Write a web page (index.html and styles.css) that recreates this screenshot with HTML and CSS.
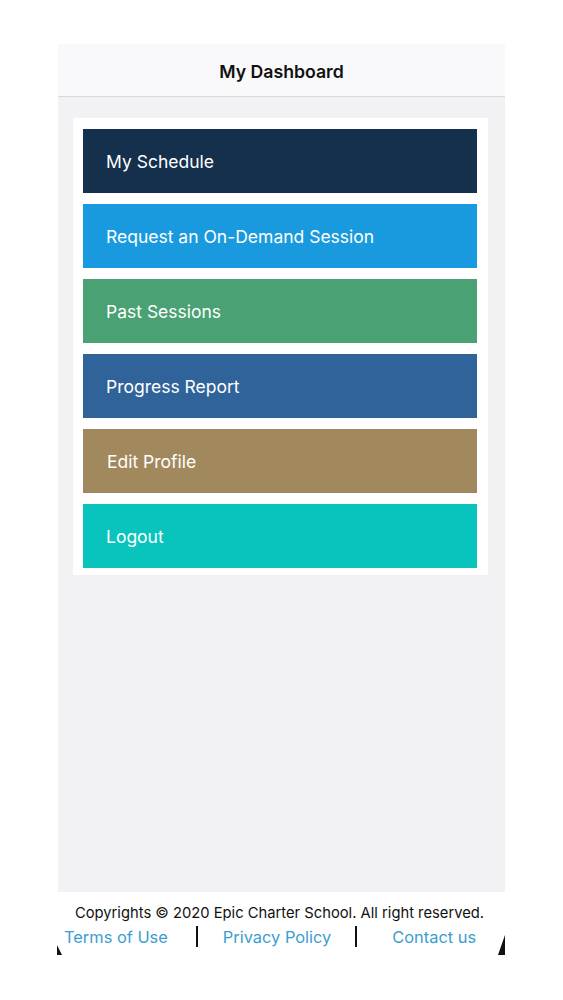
FILE: index.html
```html
<!DOCTYPE html>
<html>
<head>
<meta charset="utf-8">
<link rel="stylesheet" href="styles.css">
</head>
<body>
<div class="phone">
  <header class="topbar"><h1>My Dashboard</h1></header>
  <main class="content">
    <nav class="menu">
      <a class="item schedule">My Schedule</a>
      <a class="item request">Request an On-Demand Session</a>
      <a class="item past">Past Sessions</a>
      <a class="item progress">Progress Report</a>
      <a class="item profile">Edit Profile</a>
      <a class="item logout">Logout</a>
    </nav>
  </main>
  <footer class="footer">
    <p class="copy">Copyrights © 2020 Epic Charter School. All right reserved.</p>
    <div class="links">
      <a class="link">Terms of Use</a>
      <span class="sep"></span>
      <a class="link">Privacy Policy</a>
      <span class="sep"></span>
      <a class="link">Contact us</a>
    </div>
    <span class="corner left"></span>
    <span class="corner right"></span>
  </footer>
</div>
</body>
</html>
```

FILE: styles.css
```css
html, body {
  margin: 0;
  padding: 0;
  background: #ffffff;
  font-family: Inter, "Noto Sans", "Liberation Sans", sans-serif;
}

.phone {
  margin: 44px 0 0 58px;
  width: 447px;
  display: flex;
  flex-direction: column;
}

.topbar {
  height: 53px;
  background: #f9f8fa;
  border-bottom: 1px solid #d9d9dc;
  display: flex;
  align-items: center;
  justify-content: center;
  padding-top: 3px;
  box-sizing: border-box;
}

.topbar h1 {
  margin: 0;
  font-size: 17.7px;
  font-weight: 600;
  color: #111;
}

.content {
  height: 795px;
  background: #f2f1f4;
  padding: 21px 17px 0 15px;
  box-sizing: border-box;
}

.menu {
  background: #ffffff;
  padding: 11px 11px 7px 10px;
  display: flex;
  flex-direction: column;
  gap: 11px;
}

.item {
  height: 64px;
  display: flex;
  align-items: center;
  padding-left: 23px;
  color: #ffffff;
  font-size: 17.5px;
  font-weight: 400;
}

.schedule { background: #14304d; }
.request { background: #1a9ade; }
.past { background: #4aa173; }
.progress { background: #2f6399; }
.profile { background: #a1895d; padding-left: 24px; }
.logout { background: #08c4bc; }

.footer {
  position: relative;
  height: 63px;
  background: #ffffff;
  display: flex;
  flex-direction: column;
  align-items: center;
  padding-right: 4px;
  box-sizing: border-box;
}

.copy {
  margin: 12px 0 0;
  font-size: 14.75px;
  color: #111;
  white-space: nowrap;
}

.links {
  width: 100%;
  margin-top: 4px;
  display: flex;
  align-items: center;
  padding: 0 0 0 6px;
  box-sizing: border-box;
}

.link {
  color: #3a9dd1;
  font-size: 16.4px;
  white-space: nowrap;
  flex-shrink: 0;
}

.sep {
  flex-shrink: 0;
  width: 2px;
  height: 21px;
  background: #111;
}

.links .sep:nth-of-type(1) { margin: 0 25px 0 28px; }
.links .sep:nth-of-type(2) { margin: 0 35px 0 24px; }

.corner {
  position: absolute;
  bottom: 0;
  width: 0;
  height: 0;
}

.corner.left {
  left: -1px;
  border-left: 5px solid #111;
  border-top: 10px solid transparent;
}

.corner.right {
  right: 0;
  border-right: 7px solid #111;
  border-top: 20px solid transparent;
}
```
